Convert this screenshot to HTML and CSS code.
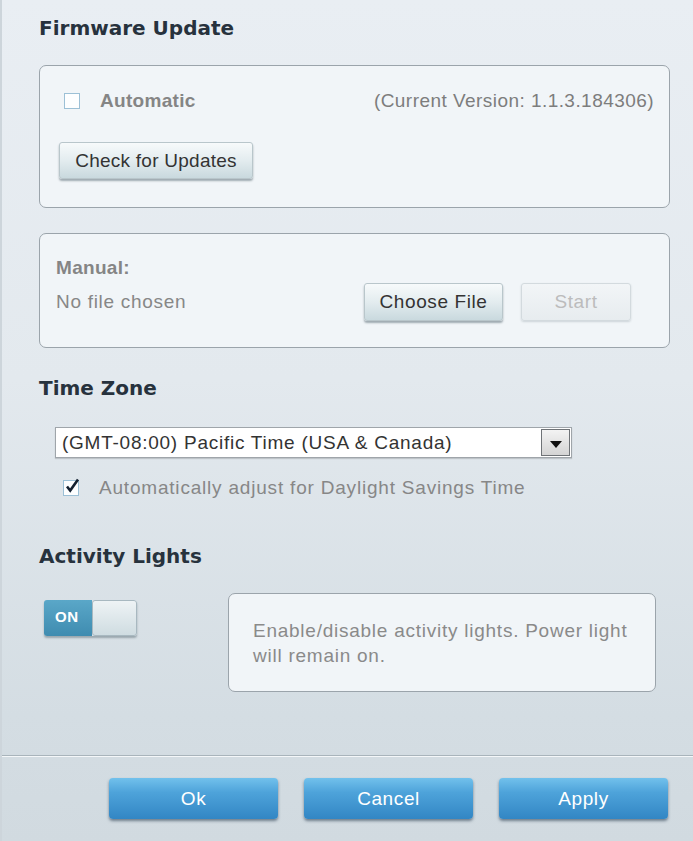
FILE: index.html
```html
<!DOCTYPE html>
<html>
<head>
<meta charset="UTF-8">
<title>Router Settings</title>
<link rel="stylesheet" href="styles.css">
</head>
<body>
<div class="panel">
  <div class="content">
    <h2 class="title">Firmware Update</h2>
    <div class="box box-auto">
      <div class="row">
        <span class="check"></span>
        <span class="label-strong">Automatic</span>
        <span class="version">(Current Version: 1.1.3.184306)</span>
      </div>
      <button class="btn btn-check">Check for Updates</button>
    </div>

    <div class="box box-manual">
      <div class="label-strong">Manual:</div>
      <div class="row manual-row">
        <span class="muted file-name">No file chosen</span>
        <button class="btn btn-choose">Choose File</button>
        <button class="btn btn-start" disabled>Start</button>
      </div>
    </div>

    <h2 class="title title-tz">Time Zone</h2>
    <div class="select">
      <span class="select-text">(GMT-08:00) Pacific Time (USA &amp; Canada)</span>
      <span class="select-arrow"><svg width="12" height="7" viewBox="0 0 12 7"><path d="M0 0h12L6 7z" fill="#111"/></svg></span>
    </div>
    <div class="row dst-row">
      <span class="check checked"><svg width="16" height="16" viewBox="0 0 16 16"><path d="M3 8.5l3.2 4L14 1.5" fill="none" stroke="#142030" stroke-width="2.6"/></svg></span>
      <span class="muted">Automatically adjust for Daylight Savings Time</span>
    </div>

    <h2 class="title title-lights">Activity Lights</h2>
    <div class="lights-row">
      <div class="toggle">
        <span class="toggle-on">ON</span>
        <span class="toggle-knob"></span>
      </div>
      <div class="info">Enable/disable activity lights. Power light will remain on.</div>
    </div>
  </div>

  <div class="footer">
    <button class="btn-blue">Ok</button>
    <button class="btn-blue">Cancel</button>
    <button class="btn-blue">Apply</button>
  </div>
</div>
</body>
</html>
```

FILE: styles.css
```css
html, body {
  margin: 0;
  padding: 0;
  height: 100%;
}

body {
  font-family: "Liberation Sans", Arial, Helvetica, sans-serif;
  font-size: 19px;
  letter-spacing: 0.7px;
  color: #7a7a7a;
  background: linear-gradient(to bottom, #e9eef3 0%, #e3e9ee 45%, #d4dde3 85%, #d1dae0 100%);
}

.panel {
  min-height: 841px;
  border-left: 2px solid #cdd5db;
  box-sizing: border-box;
}

.content {
  padding: 17px 0 0 37px;
  width: 631px;
}

.title {
  margin: 0;
  font-family: "DejaVu Sans", Verdana, sans-serif;
  font-weight: bold;
  font-size: 20px;
  line-height: 22px;
  letter-spacing: 0;
  color: #27323d;
}

.box {
  border: 1px solid #9ba4ab;
  border-radius: 7px;
  background: #f1f5f8;
}

.row {
  display: flex;
  align-items: center;
}

.box-auto {
  margin-top: 26px;
  padding: 27px 15px 28px 19px;
}

.box-auto .row {
  height: 16px;
  padding-left: 5px;
}

.check {
  width: 14px;
  height: 14px;
  border: 1px solid #9cc0d6;
  background: #fdfeff;
  flex: none;
  position: relative;
}

.check svg {
  position: absolute;
  left: 0;
  top: -3px;
}

.label-strong {
  font-weight: bold;
  color: #858585;
  letter-spacing: 0.3px;
  line-height: 20px;
}

.box-auto .label-strong {
  margin-left: 20px;
}

.version {
  margin-left: auto;
  color: #7d7d7d;
  letter-spacing: 0.45px;
}

.btn {
  font-family: inherit;
  font-size: 19px;
  letter-spacing: 0.6px;
  color: #333;
  border: 1px solid #b9c6cb;
  border-radius: 3px;
  background: linear-gradient(to bottom, #f7fafb 0%, #e3ecef 50%, #c9d9de 100%);
  box-shadow: 0 2px 2px rgba(60,80,90,0.45);
  padding: 0;
}

.btn-check {
  display: block;
  margin-top: 33px;
  width: 194px;
  height: 37px;
  letter-spacing: 0.25px;
}

.box-manual {
  margin-top: 25px;
  padding: 24px 38px 26px 16px;
}

.manual-row {
  margin-top: 5px;
}

.file-name {
  flex: 1;
}

.btn-choose {
  width: 139px;
  height: 38px;
}

.btn-start {
  width: 110px;
  height: 38px;
  margin-left: 18px;
  color: #bcbcbc;
  background: linear-gradient(to bottom, #f2f5f7 0%, #e7ecef 100%);
  border-color: #d3dade;
  box-shadow: 0 1px 2px rgba(60,80,90,0.2);
}

.muted {
  color: #878787;
}

.title-tz {
  margin-top: 29px;
}

.select {
  display: flex;
  align-items: center;
  margin: 28px 0 0 16px;
  width: 517px;
  height: 31px;
  box-sizing: border-box;
  border: 1px solid #9fa5aa;
  background: #fff;
  box-shadow: 0 1px 1px rgba(0,0,0,0.15);
}

.select-text {
  flex: 1;
  padding-left: 6px;
  color: #333;
  letter-spacing: 0.75px;
}

.select-arrow {
  width: 29px;
  height: 27px;
  margin-right: 1px;
  box-sizing: border-box;
  border: 1px solid #6f7377;
  background: linear-gradient(to bottom, #f3f3f3, #d4d4d4);
  display: flex;
  align-items: center;
  justify-content: center;
  padding-top: 3px;
}

.dst-row {
  margin: 22px 0 0 24px;
  height: 16px;
}

.dst-row .muted {
  margin-left: 20px;
  letter-spacing: 0.8px;
}

.title-lights {
  margin-top: 49px;
}

.lights-row {
  display: flex;
  align-items: flex-start;
  margin-top: 26px;
}

.toggle {
  display: flex;
  margin: 7px 0 0 5px;
  width: 93px;
  height: 36px;
  border-radius: 3px;
  box-shadow: 0 2px 2px rgba(60,80,90,0.4);
  overflow: hidden;
}

.toggle-on {
  width: 48px;
  background: linear-gradient(to bottom, #5aa7c8, #3f8cb0);
  color: #fff;
  font-weight: bold;
  font-size: 15px;
  letter-spacing: 0.5px;
  line-height: 34px;
  padding-left: 11px;
  box-sizing: border-box;
}

.toggle-knob {
  flex: 1;
  border: 1px solid #a8b8c0;
  border-radius: 3px;
  background: linear-gradient(to bottom, #eef3f5, #cfdce1);
}

.info {
  margin-left: 91px;
  width: 428px;
  height: 99px;
  box-sizing: border-box;
  padding: 24px 20px 0 24px;
  border: 1px solid #9ba4ab;
  border-radius: 7px;
  background: #f1f5f8;
  line-height: 25px;
  letter-spacing: 0.75px;
  color: #8a8a8a;
}

.footer {
  margin-top: 63px;
  border-top: 1px solid #a9b4bb;
  box-shadow: inset 0 1px 0 #f4f7f9;
  display: flex;
  justify-content: flex-end;
  gap: 26px;
  padding: 22px 25px 0 0;
}

.btn-blue {
  width: 169px;
  height: 41px;
  border: none;
  border-radius: 4px;
  font-family: inherit;
  font-size: 19px;
  letter-spacing: 0.6px;
  color: #fff;
  background: linear-gradient(to bottom, #72c1ec 0%, #4ea3da 35%, #3286c4 100%);
  box-shadow: 0 2px 3px rgba(30,50,70,0.55);
}
```
